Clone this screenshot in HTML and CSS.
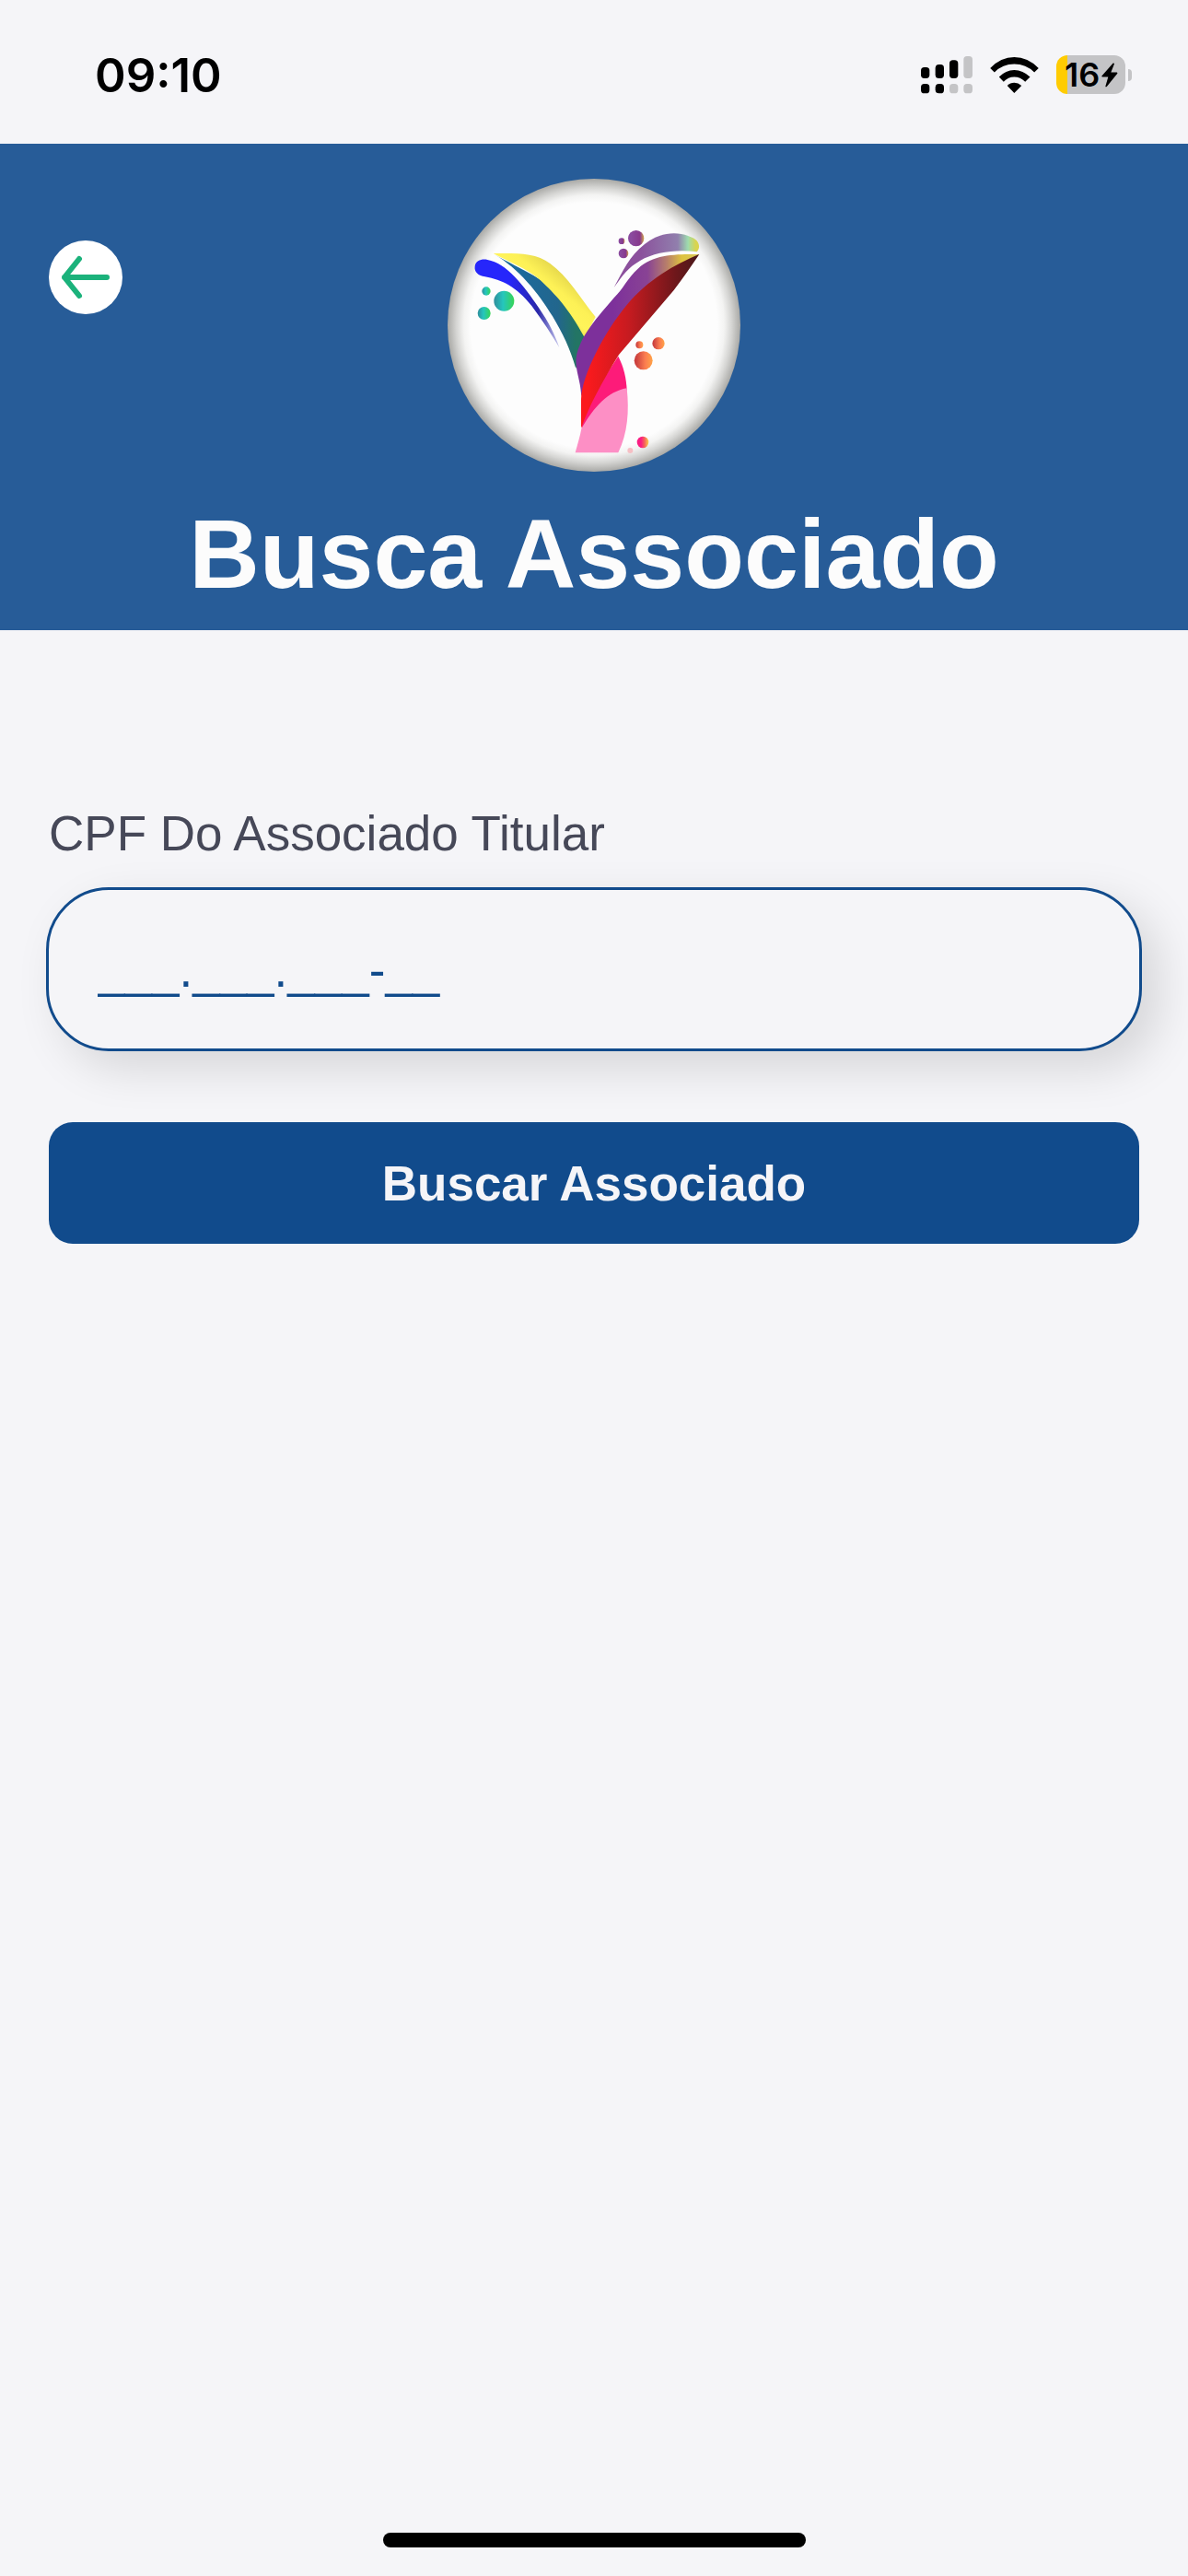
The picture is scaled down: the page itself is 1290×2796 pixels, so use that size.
FILE: index.html
```html
<!DOCTYPE html>
<html lang="pt-BR">
<head>
    <meta charset="UTF-8">
    <meta name="viewport" content="width=device-width, initial-scale=1.0">
    <title>Busca Associado</title>
    <link rel="stylesheet" href="styles.css">
</head>
<body>
    <div class="status-bar">
        <span class="time">09:10</span>
        <div class="status-icons">
            <svg class="signal" viewBox="0 0 168 123" aria-hidden="true">
                <rect x="0" y="36" width="28" height="36" rx="11"/>
                <rect x="47" y="27" width="28" height="45" rx="11"/>
                <rect x="93" y="13" width="28" height="59" rx="11"/>
                <rect class="off" x="139" y="0" width="29" height="72" rx="11"/>
                <rect x="0" y="90" width="28" height="31" rx="11"/>
                <rect x="47" y="90" width="28" height="31" rx="11"/>
                <rect class="off" x="93" y="90" width="28" height="31" rx="11"/>
                <rect class="off" x="139" y="90" width="29" height="31" rx="11"/>
            </svg>
            <svg class="wifi" viewBox="0 0 159 118" aria-hidden="true">
                <path d="M0 36Q35 0 79 0T159 36L145 50Q117 23 79 23T14 50Z"/>
                <path d="M29 65Q51 42 79 42T131 65L115 81Q99 65 79 65T44 81Z"/>
                <path d="M56 94Q66 84 79 84T103 94L79 118Z"/>
            </svg>
            <div class="battery">
                <span class="battery-body">
                    <span>16</span>
                    <svg class="bolt" viewBox="0 0 54 80" aria-hidden="true">
                        <path d="M38 1L1 43Q0 46 4 46H22L13 77Q14 80 18 77L52 35Q53 32 50 31H31L42 3Q41 0 38 1Z"/>
                    </svg>
                </span>
                <span class="battery-tip"></span>
            </div>
        </div>
    </div>

    <header class="header">
        <a href="#" class="back-btn" aria-label="Voltar">
            <svg viewBox="0 0 80 80" aria-hidden="true">
                <path d="M33 20L17 40L33 60M17 40H63"/>
            </svg>
        </a>

        <svg class="logo" viewBox="48 42 954 954" role="img" aria-label="Logo">
            <defs>
                <radialGradient id="disc">
                    <stop offset="0.84" stop-color="#fdfdfd"/>
                    <stop offset="0.89" stop-color="#f3f3f2"/>
                    <stop offset="0.94" stop-color="#d5d5d3"/>
                    <stop offset="1" stop-color="#a9a9a6"/>
                </radialGradient>
                <linearGradient id="blue">
                    <stop offset="0.4" stop-color="#2626fb"/>
                    <stop offset="0.75" stop-color="#2a28a8"/>
                    <stop offset="1" stop-color="#c9c9ee"/>
                </linearGradient>
                <linearGradient id="teal">
                    <stop offset="0.3" stop-color="#1c6a9b"/>
                    <stop offset="0.7" stop-color="#22668d"/>
                    <stop offset="0.9" stop-color="#237564"/>
                </linearGradient>
                <linearGradient id="yellow" x1="0" y1="1" x2="1" y2="0">
                    <stop offset="0.4" stop-color="#ecdf4e"/>
                    <stop offset="0.5" stop-color="#fff45a"/>
                    <stop offset="0.6" stop-color="#fdf156"/>
                    <stop offset="0.75" stop-color="#e2d44a"/>
                </linearGradient>
                <linearGradient id="purple">
                    <stop offset="0.3" stop-color="#7d309b"/>
                    <stop offset="0.58" stop-color="#894394"/>
                    <stop offset="0.74" stop-color="#b98069"/>
                    <stop offset="0.86" stop-color="#dec33f"/>
                    <stop offset="1" stop-color="#d9c95c"/>
                </linearGradient>
                <linearGradient id="lilac">
                    <stop offset="0.3" stop-color="#8b509c"/>
                    <stop offset="0.75" stop-color="#917fad"/>
                    <stop offset="0.87" stop-color="#9edcae"/>
                    <stop offset="0.96" stop-color="#d9d44f"/>
                </linearGradient>
                <linearGradient id="red">
                    <stop offset="0.05" stop-color="#fb1a1d"/>
                    <stop offset="0.4" stop-color="#c71b20"/>
                    <stop offset="0.8" stop-color="#6e171b"/>
                    <stop offset="1" stop-color="#48191a"/>
                </linearGradient>
                <linearGradient id="green">
                    <stop offset="0" stop-color="#2f8e9c"/>
                    <stop offset="0.45" stop-color="#25c6bd"/>
                    <stop offset="1" stop-color="#36d455"/>
                </linearGradient>
                <linearGradient id="violet">
                    <stop offset="0.2" stop-color="#8a4a9e"/>
                    <stop offset="0.75" stop-color="#87398c"/>
                    <stop offset="1" stop-color="#d2a849"/>
                </linearGradient>
                <linearGradient id="orange">
                    <stop offset="0.1" stop-color="#cb403e"/>
                    <stop offset="0.6" stop-color="#fb7d50"/>
                    <stop offset="1" stop-color="#ffa448"/>
                </linearGradient>
                <linearGradient id="berry">
                    <stop offset="0.35" stop-color="#fa1c82"/>
                    <stop offset="0.65" stop-color="#f5635a"/>
                    <stop offset="1" stop-color="#fbce4c"/>
                </linearGradient>
            </defs>
            <circle cx="525" cy="519" r="477" fill="url(#disc)"/>

            <!-- left arm -->
            <path fill="url(#blue)" d="M137 327C140 308 160 302 178 306C240 316 298 392 345 462C378 510 398 550 412 592C388 550 358 505 322 456C272 394 226 371 170 361C148 358 134 345 137 327Z"/>
            <path fill="url(#teal)" d="M200 288C290 340 375 370 430 440C465 480 485 525 496 555L466 660C445 590 425 550 390 490C345 415 280 335 200 288Z"/>
            <path fill="url(#yellow)" d="M197 285C265 285 335 281 382 318C440 360 480 430 530 492L495 560C440 460 400 420 350 372C300 330 245 312 197 285Z"/>

            <!-- stem -->
            <path fill="#fd1b79" d="M604 620C622 655 630 690 632 730L560 800L486 855V800Z"/>
            <path fill="#fd8fc5" d="M632 724C640 800 635 870 604 934H464C472 905 480 880 484 856C525 785 570 735 632 724Z"/>

            <!-- right arm -->
            <path fill="url(#purple)" d="M868 288C800 288 720 285 668 335C635 365 620 400 590 430C540 490 480 550 467 625C464 670 480 690 484 750C510 700 560 550 650 450C720 375 790 335 868 288Z"/>
            <path fill="url(#red)" d="M868 288C790 320 700 370 630 455C560 540 485 680 483 760V855C510 780 550 705 606 615L785 405C815 365 840 330 868 288Z"/>
            <path fill="url(#lilac)" d="M590 396C620 340 640 295 690 255C740 215 800 210 848 235C870 247 872 268 860 280C795 272 725 280 675 309C635 332 620 355 590 396Z"/>

            <!-- bubbles -->
            <g fill="url(#green)">
                <circle cx="232" cy="440" r="33"/>
                <circle cx="167" cy="480" r="21"/>
                <circle cx="174" cy="408" r="14"/>
            </g>
            <g fill="url(#violet)">
                <circle cx="662" cy="236" r="26"/>
                <circle cx="621" cy="285" r="16"/>
                <circle cx="615" cy="245" r="10"/>
            </g>
            <g fill="url(#orange)">
                <circle cx="686" cy="634" r="30"/>
                <circle cx="735" cy="578" r="20"/>
                <circle cx="673" cy="583" r="12"/>
            </g>
            <circle cx="684" cy="900" r="19" fill="url(#berry)"/>
            <circle cx="643" cy="927" r="9" fill="#f6bfc4"/>
        </svg>

        <h1>Busca Associado</h1>
    </header>

    <main class="content">
        <form class="search-form">
            <label for="cpf">CPF Do Associado Titular</label>
            <input type="text" id="cpf" name="cpf" inputmode="numeric" value="___.___.___-__">
            <button type="submit" class="search-btn">Buscar Associado</button>
        </form>
    </main>

    <div class="home-indicator"></div>
</body>
</html>
```
FILE: styles.css
```css
* {
    box-sizing: border-box;
}

body {
    margin: 0;
    min-height: 100vh;
    display: flex;
    flex-direction: column;
    background: #f5f5f8;
    font-family: Helvetica, "Liberation Sans", Arial, sans-serif;
}

/* status bar */
.status-bar {
    height: 156px;
    padding: 4px 61px 0 103px;
    display: flex;
    justify-content: space-between;
    align-items: flex-start;
    color: #000;
    font-family: Inter, sans-serif;
}

.time {
    margin-top: 48px;
    font-size: 51px;
    line-height: 60px;
    font-weight: 600;
}

.status-icons {
    margin-top: 56px;
    display: flex;
    align-items: center;
    gap: 19px;
}

.signal {
    width: 56px;
    height: 41px;
}

.signal .off {
    fill: #c4c4c6;
}

.wifi {
    width: 53px;
    height: 39px;
}

.battery {
    display: flex;
    align-items: center;
    gap: 3px;
}

.battery-body {
    width: 75px;
    height: 42px;
    padding-left: 9px;
    border-radius: 12px;
    display: flex;
    align-items: center;
    gap: 2px;
    background: linear-gradient(to right, #ffcc02 12px, #c4c4c6 12px);
    font-size: 36px;
    font-weight: 600;
}

.bolt {
    width: 18px;
    height: 27px;
    flex: none;
}

.battery-tip {
    width: 4px;
    height: 13px;
    border-radius: 0 4px 4px 0;
    background: #c4c4c6;
}

/* header */
.header {
    padding: 38px 53px 18px;
    display: grid;
    grid-template-columns: 1fr auto 1fr;
    background: #275c98;
}

.back-btn {
    width: 80px;
    height: 80px;
    margin-top: 67px;
    border-radius: 50%;
    background: #fff;
}

.back-btn svg {
    display: block;
    fill: none;
    stroke: #1bb27b;
    stroke-width: 6;
    stroke-linecap: round;
    stroke-linejoin: round;
}

.logo {
    width: 318px;
    height: 318px;
}

h1 {
    grid-column: 1 / -1;
    margin: 24px 0 0;
    color: #fcfcfc;
    font-size: 106px;
    line-height: 130px;
    font-weight: 700;
    text-align: center;
}

/* search form */
.content {
    flex: 1;
    padding: 191px 50px 0;
}

.search-form {
    display: flex;
    flex-direction: column;
    font-size: 53px;
    line-height: 60px;
}

.search-form label {
    margin: 0 3px 28px;
    color: #464858;
}

.search-form input {
    width: 100%;
    height: 178px;
    margin-bottom: 77px;
    padding: 0 53px;
    border: 3px solid #114b8c;
    border-radius: 68px;
    outline: none;
    background: #f5f5f8;
    box-shadow: 18px 18px 50px rgba(0, 0, 0, 0.13);
    color: #114b8c;
    font: inherit;
}

.search-btn {
    height: 132px;
    margin: 0 3px;
    padding: 2px 0 0;
    border: none;
    border-radius: 26px;
    background: #114b8c;
    color: #f5f5f8;
    font: inherit;
    font-weight: 700;
    cursor: pointer;
}

.home-indicator {
    width: 459px;
    max-width: 60%;
    height: 16px;
    margin: 0 auto 31px;
    border-radius: 8px;
    background: #000;
}
```
